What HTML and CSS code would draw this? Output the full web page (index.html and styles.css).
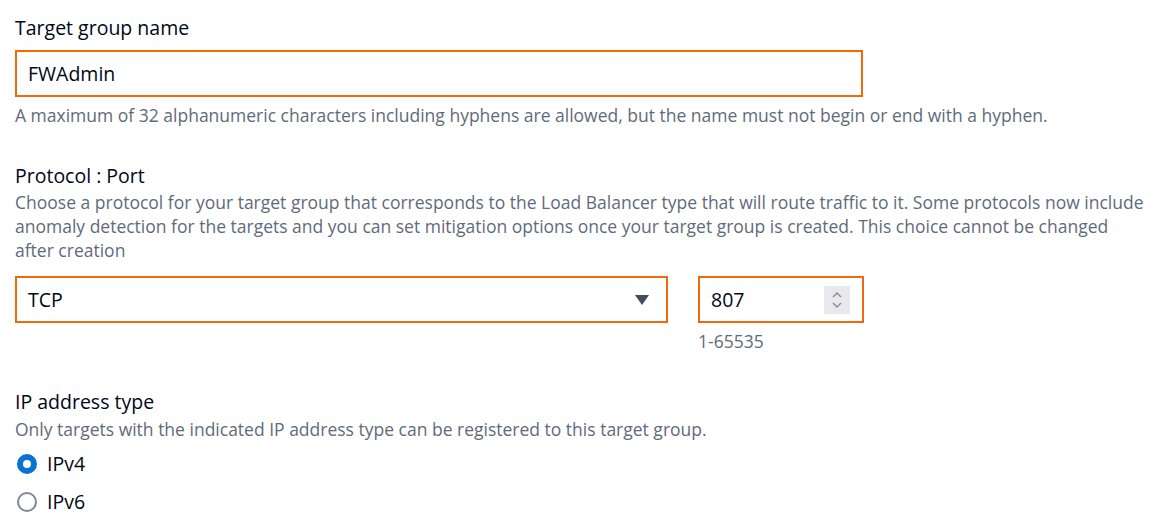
FILE: index.html
```html
<!DOCTYPE html>
<html lang="en">
<head>
    <meta charset="UTF-8">
    <title>Target group</title>
    <link rel="stylesheet" href="styles.css">
</head>
<body>
    <div class="form">
        <!-- name -->
        <div class="field">
            <label class="label">Target group name</label>
            <div class="box box-name">FWAdmin</div>
            <p class="hint">A maximum of 32 alphanumeric characters including hyphens are allowed, but the name must not begin or end with a hyphen.</p>
        </div>

        <!-- protocol / port -->
        <div class="field field-protocol">
            <label class="label">Protocol : Port</label>
            <p class="desc">Choose a protocol for your target group that corresponds to the Load Balancer type that will route traffic to it. Some protocols now include anomaly detection for the targets and you can set mitigation options once your target group is created. This choice cannot be changed after creation</p>
            <div class="row">
                <div class="box box-select">
                    <span>TCP</span>
                    <svg class="caret" width="16" height="12" viewBox="0 0 16 12"><path d="M1 1h14L8 11z" fill="#414d5c"/></svg>
                </div>
                <div class="port">
                    <div class="box box-port">
                        <span>807</span>
                        <span class="spin">
                            <svg width="14" height="22" viewBox="0 0 14 22"><path d="M3 8l4-4 4 4M3 14l4 4 4-4" fill="none" stroke="#8d8d96" stroke-width="1.5"/></svg>
                        </span>
                    </div>
                    <p class="hint">1-65535</p>
                </div>
            </div>
        </div>

        <!-- ip type -->
        <div class="field field-ip">
            <label class="label">IP address type</label>
            <p class="desc">Only targets with the indicated IP address type can be registered to this target group.</p>
            <div class="radios">
                <div class="radio checked"><span class="dot"></span>IPv4</div>
                <div class="radio"><span class="dot"></span>IPv6</div>
            </div>
        </div>
    </div>
</body>
</html>
```

FILE: styles.css
```css
* {
    margin: 0;
    padding: 0;
    box-sizing: border-box;
}

body {
    background: #fff;
    font-family: 'Open Sans', 'Noto Sans', sans-serif;
    color: #16191f;
}

.form {
    padding: 15px 0 0 15px;
}

.label {
    display: block;
    font-size: 19.5px;
    line-height: 26px;
    color: #000716;
}

.box {
    border: 2px solid #f06a0a;
    height: 47px;
    display: flex;
    align-items: center;
    padding: 0 11px;
    font-size: 19.5px;
    color: #000716;
}

.box-name {
    width: 848px;
    margin-top: 9px;
}

.hint {
    font-size: 17.5px;
    line-height: 24px;
    color: #5f6b7a;
    margin-top: 6px;
}

.desc {
    max-width: 1132px;
    font-size: 17.5px;
    line-height: 24px;
    color: #5f6b7a;
    margin-top: 1px;
}

.field-protocol {
    margin-top: 36px;
}

.row {
    display: flex;
    gap: 30px;
    margin-top: 14px;
}

.box-select {
    width: 653px;
    justify-content: space-between;
}

.caret {
    margin-right: 5px;
}

.box-port {
    width: 166px;
    justify-content: space-between;
    padding-right: 12px;
}

.port .hint {
    margin-top: 6px;
}

.spin {
    width: 26px;
    height: 28px;
    background: #e9e9ed;
    display: flex;
    align-items: center;
    justify-content: center;
}

.field-ip {
    margin-top: 36px;
}

.field-ip .desc {
    margin-top: 2px;
}

.radios {
    margin-top: 4px;
}

.radio {
    display: flex;
    align-items: center;
    gap: 10px;
    font-size: 19.5px;
    line-height: 26px;
    height: 38px;
    color: #000716;
    padding-left: 2px;
}

.dot {
    width: 20px;
    height: 20px;
    border-radius: 50%;
    border: 2px solid #7d8998;
}

.radio.checked .dot {
    border: 6px solid #0972d3;
}
```
